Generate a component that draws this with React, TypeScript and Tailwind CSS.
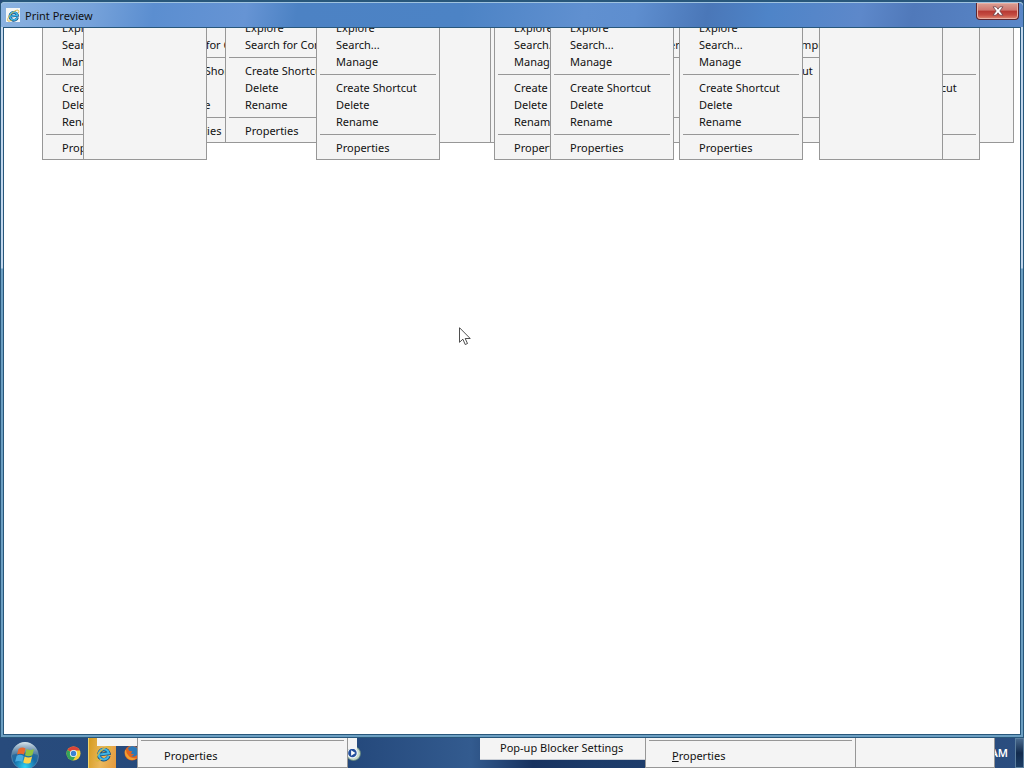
import type { ReactNode } from "react";

type Kind = "long" | "short" | "blankLong" | "blankShort";
type Menu = { id: string; kind: Kind; place: string };

const menus: Menu[] = [
  { id: "a", kind: "short", place: "left-[144px]" },
  { id: "b", kind: "short", place: "left-[221px]" },
  { id: "c", kind: "blankShort", place: "left-[342px]" },
  { id: "d", kind: "blankShort", place: "left-[322px]" },
  { id: "e", kind: "short", place: "left-[548px]" },
  { id: "f", kind: "blankShort", place: "left-[845px]" },
  { id: "g", kind: "short", place: "left-[708px]" },
  { id: "h", kind: "long", place: "left-[38px]" },
  { id: "i", kind: "blankLong", place: "left-[79px]" },
  { id: "j", kind: "long", place: "left-[312px]" },
  { id: "k", kind: "long", place: "left-[490px]" },
  { id: "l", kind: "long", place: "left-[546px]" },
  { id: "m", kind: "long", place: "left-[675px]" },
  { id: "n", kind: "long", place: "left-[852px]" },
  { id: "o", kind: "blankLong", place: "left-[815px]" },
];

const groups: Record<Kind, string[][]> = {
  long: [["Explore", "Search...", "Manage"], ["Create Shortcut", "Delete", "Rename"], ["Properties"]],
  short: [["Explore", "Search for Computers..."], ["Create Shortcut", "Delete", "Rename"], ["Properties"]],
  blankLong: [],
  blankShort: [],
};

const sizes: Record<Kind, string> = {
  long: "w-[124px] h-[143px]",
  short: "w-[170px] h-[126px]",
  blankLong: "w-[124px] h-[143px]",
  blankShort: "w-[165px] h-[126px]",
};

function ContextMenu({ kind, place }: { kind: Kind; place: string }) {
  return (
    <div className={`absolute -top-[11px] border border-[#979797] bg-[#f4f4f4] p-[2px] ${sizes[kind]} ${place}`}>
      {groups[kind].map((items, i) => (
        <div key={i}>
          {i > 0 && <div className="mx-px mt-[3px] mb-[5px] h-px bg-[#979797]" />}
          {items.map((t) => (
            <button key={t} className="block h-[17px] w-full whitespace-nowrap pb-[2px] pl-[17px] text-left leading-[15px]">
              {t}
            </button>
          ))}
        </div>
      ))}
    </div>
  );
}

function IeIcon({ className }: { className: string }) {
  return (
    <svg viewBox="0 0 20 20" className={className} aria-hidden="true">
      <g transform="rotate(-8 10 10)" fill="none">
        <path d="M15.800 13.600A6 6 0 1 1 16.200 10.600H6" stroke="#0d4a80" strokeWidth="4.200" />
        <path d="M15.600 13.600A6 6 0 1 1 16.200 10.600H6" stroke="#3fb4e4" strokeWidth="2.600" />
      </g>
      <path d="M17.300 6.500C20.500.500 15 .500 9.500 4.800C3.500 9.500-1 16.500 1.800 18.500C3 19.300 5.500 18.200 7.500 16.800" fill="none" stroke="#d9b53a" strokeWidth="1.500" />
    </svg>
  );
}

function StartOrb() {
  return (
    <svg viewBox="0 0 30 28" className="h-[28px] w-[30px]" aria-hidden="true">
      <defs>
        <radialGradient id="orb" cx="50%" cy="90%" r="85%">
          <stop offset="0" stopColor="#2fd3f5" />
          <stop offset=".5" stopColor="#176aa5" />
          <stop offset="1" stopColor="#476b91" />
        </radialGradient>
        <linearGradient id="gloss" x2="0" y2="1">
          <stop stopColor="#dbe7ee" />
          <stop offset="1" stopColor="#7695ad" stopOpacity=".4" />
        </linearGradient>
      </defs>
      <circle cx="15" cy="15" r="13.5" fill="url(#orb)" stroke="#5f8db2" strokeWidth=".7" />
      <path d="M2 14a13 13 0 0 1 26 0Q15 9 2 14" fill="url(#gloss)" />
      <path d="M8.500 8Q12 5.500 15.500 7.500L14 13.500Q10.500 11.800 7 13.500Z" fill="#e9682e" />
      <path d="M16.500 8Q20 10 24 8L22.400 14.300Q18.500 16.300 15 14.300Z" fill="#8fc242" />
      <path d="M6.700 14.700Q10 12.900 13.700 14.900L12.200 21Q9 19 5.100 20.800Z" fill="#4aabe0" />
      <path d="M14.700 15.500Q18.300 17.400 22.100 15.500L20.500 21.700Q16.800 23.500 13.200 21.600Z" fill="#fbd24d" />
    </svg>
  );
}

function ChromeIcon() {
  return (
    <svg viewBox="0 0 16 16" className="h-[15px] w-[15px]" aria-hidden="true">
      <circle cx="8" cy="8" r="7.500" fill="#f4cf37" />
      <path d="M8 8L1.500 4.300A7.500 7.500 0 0 1 14.800 4.700H8Z" fill="#dc4439" />
      <path d="M8 8L1.500 4.300A7.500 7.500 0 0 0 7.400 15.500L11 9.500Z" fill="#35a45a" />
      <circle cx="8" cy="8" r="3.800" fill="#f5f7f8" />
      <circle cx="8" cy="8" r="2.900" fill="#3b82d4" />
    </svg>
  );
}

function FirefoxIcon() {
  return (
    <svg viewBox="0 0 16 16" className="h-[16px] w-[16px]" aria-hidden="true">
      <circle cx="8" cy="8" r="7.500" fill="#e2631f" />
      <path d="M4 3Q8-1 13 3Q15.500 7 13 10Q10 13 7 11Q10 10.500 10 9Q7.500 9.500 6.500 8Q8.500 7.500 8 6.200L5 5.800Z" fill="#2a78b8" />
      <path d="M1 5Q0 11 4.500 14Q9 16.500 13 13Q7 14 4 10Q2 8 2.300 5.500Z" fill="#f0a030" />
      <path d="M13 3Q16.500 7 14.500 11Q14.800 7 13 3" fill="#f7c344" />
    </svg>
  );
}

function Panel({ className, children }: { className: string; children?: ReactNode }) {
  return <div className={`absolute bg-[#f4f4f4] ${className}`}>{children}</div>;
}

export default function App() {
  return (
    <div className="relative flex h-screen flex-col overflow-hidden bg-[#264a7c] font-['Noto_Sans',sans-serif] text-[11px] text-[#111]">
      <main className="flex min-h-0 flex-1 flex-col rounded-t-[5px] border-x border-y border-t-2 border-[#28577b] bg-[linear-gradient(#c2d7ec_0,#c2d7ec_266px,#6c9fc2_267px,#6c9fc2_100%)] px-[2px] pb-[2px]">
        <header className="-mx-[2px] flex h-[25px] shrink-0 items-center rounded-t-[4px] border-t border-[#9fc3df] bg-[linear-gradient(100deg,#8bb2e0_0%,#76a2da_9%,#5b8ed0_15%,#6694d4_24%,#4c82c4_29%,#4c83c5_45%,#6090d0_57%,#5e8ecf_62%,#4a77b8_69%,#4e84c8_75%,#5d88ca_84%,#5079ba_89%,#5a87c8_100%)] pl-[5px]">
          <span className="mr-[5px] flex h-[14px] w-[14px] items-center justify-center bg-[#f4f6f7]">
            <IeIcon className="h-[13px] w-[13px]" />
          </span>
          <h1 className="flex-1 leading-[17px]">Print Preview</h1>
          <button
            aria-label="Close"
            className="mr-[4px] flex h-[17px] w-[43px] items-center justify-center self-start rounded-b-[4px] border border-t-0 border-[#5b2731] bg-[linear-gradient(#dba094_0%,#cf7770_45%,#b63832_50%,#c54c42_75%,#e08b74_100%)] shadow-[inset_0_0_0_1px_#e9b0a5]"
          >
            <svg viewBox="0 0 12 10" className="h-[10px] w-[12px]" aria-hidden="true">
              <path d="M1 .8h3.200L6 3.200 7.800.8H11L7.800 5 11 9.200H7.800L6 6.800 4.200 9.200H1L4.200 5Z" fill="#fff" stroke="#694048" strokeWidth=".8" />
            </svg>
          </button>
        </header>
        <section className="relative min-h-0 flex-1 overflow-hidden border border-[#28577b] bg-white">
          {menus.map((m) => (
            <ContextMenu key={m.id} kind={m.kind} place={m.place} />
          ))}
        </section>
      </main>

      <footer className="relative flex h-[30px] shrink-0 items-center bg-[linear-gradient(90deg,#284b7c_0%,#24487b_34%,#335b8f_46%,#17325f_52%,#1b3a68_58%,#2b4e80_100%)]">
        <button aria-label="Start" className="ml-[10px] mt-[3px] h-[28px] w-[30px]">
          <StartOrb />
        </button>
        <button aria-label="Chrome" className="ml-[26px]">
          <ChromeIcon />
        </button>
        <button
          aria-label="Internet Explorer"
          className="ml-[7px] flex h-full w-[28px] items-center justify-center border-l border-[#eed36d] bg-[linear-gradient(100deg,#d59b20,#ebb85c_50%,#e4993d)] pl-[2px]"
        >
          <IeIcon className="h-[17px] w-[17px]" />
        </button>
        <button aria-label="Firefox" className="ml-[8px]">
          <FirefoxIcon />
        </button>
        <button aria-label="Media" className="ml-[206px]">
          <svg viewBox="0 0 14 14" className="h-[15px] w-[15px]" aria-hidden="true">
            <circle cx="7" cy="7" r="6.500" fill="#c9dccb" stroke="#5f8278" strokeWidth=".8" />
            <circle cx="6" cy="6.500" r="5" fill="#f1f5fa" />
            <circle cx="6" cy="6.500" r="4" fill="#24509c" />
            <path d="M4.800 4 8.800 6.500 4.800 9Z" fill="#fff" />
          </svg>
        </button>
        <span className="ml-auto mr-[7px] font-semibold text-white">AM</span>
        <button aria-label="Show desktop" className="h-full w-[9px] border border-[#5c7f9e] bg-[linear-gradient(#49698d,#122b4d_50%,#1c3d65)]" />

        <Panel className="left-[97px] top-0 h-[8px] w-[40px]" />
        <Panel className="left-[348px] top-0 h-[11px] w-[9px]" />
        <Panel className="left-[137px] top-0 h-[30px] w-[211px] border-x border-b border-[#979797] px-[3px] pt-[2px]">
          <div className="mb-[7px] h-px bg-[#979797]" />
          <button className="block pl-[23px] leading-[15px]">Properties</button>
        </Panel>
        <Panel className="left-[480px] top-0 h-[22px] w-[165px] border-b border-[#c9ced6] pl-[20px] pt-[2px]">
          <button className="block leading-[15px]">Pop-up Blocker Settings</button>
        </Panel>
        <Panel className="left-[645px] top-0 h-[30px] w-[211px] border-x border-b border-[#979797] px-[3px] pt-[2px]">
          <div className="mb-[7px] h-px bg-[#979797]" />
          <button className="block pl-[23px] leading-[15px]">
            <span className="underline">P</span>roperties
          </button>
        </Panel>
        <Panel className="left-[856px] top-0 h-[30px] w-[139px] border-b border-r border-[#979797]" />
      </footer>

      <svg viewBox="0 0 12 19" className="pointer-events-none absolute left-[459px] top-[327px] h-[19px] w-[12px]" aria-hidden="true">
        <path d="M.5.700V15.300L3.900 12.200 6.200 17.500 8.500 16.500 6.200 11.500H11.200Z" fill="#fff" stroke="#222" strokeWidth=".8" />
      </svg>
    </div>
  );
}
